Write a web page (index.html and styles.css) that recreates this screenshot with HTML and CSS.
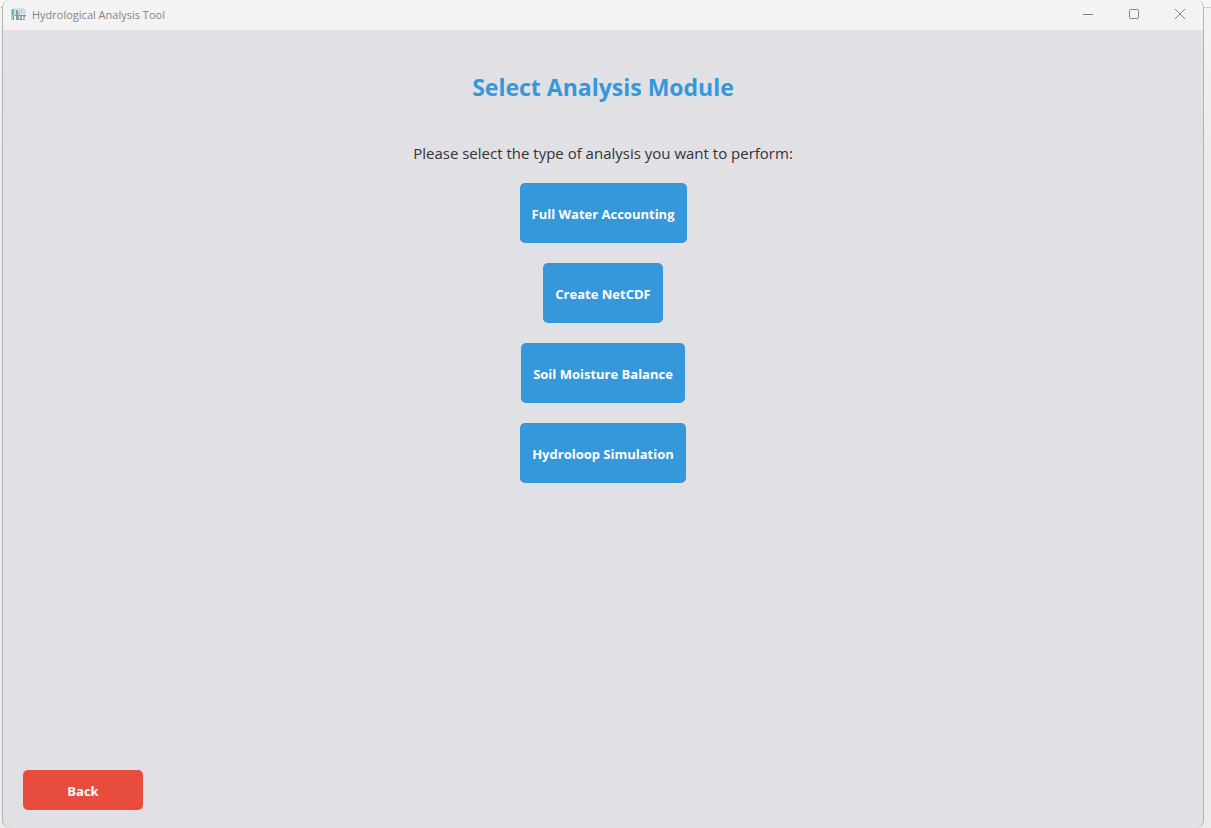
FILE: index.html
```html
<!DOCTYPE html>
<html lang="en">
<head>
<meta charset="utf-8">
<title>Hydrological Analysis Tool</title>
<link rel="stylesheet" href="styles.css">
</head>
<body>
<div class="window">
  <header class="titlebar">
    <svg class="app-icon" width="16" height="16" viewBox="0 0 16 16" aria-hidden="true">
      <rect x="3" y="1" width="10" height="8" fill="#d5e0e6"/>
      <rect x="13" y="2" width="2" height="9" fill="#d4dcf0"/>
      <path d="M0 3h2v10H0z" fill="#8adccf"/>
      <path d="M1 2h2v6H1z" fill="#5fb9c4"/>
      <path d="M2 8h1v5H2z" fill="#4f97d8"/>
      <path d="M0 10h1v3H0z" fill="#b4e29c"/>
      <path d="M5 3h2v9H5z" fill="#8b9ba4"/>
      <path d="M7 5h2v2H7zM10 2h1v4h-1z" fill="#b2c0c8"/>
      <path d="M4 8h11v1H4zM5 12h9v1H5z" fill="#8f9499"/>
      <path d="M7 9h1v3H7zM9 9h2v3H9zM12 9h2v2h-2z" fill="#a0a5a9"/>
    </svg>
    <span class="app-name">Hydrological Analysis Tool</span>
    <div class="controls">
      <button class="control" type="button" aria-label="Minimize">
        <svg width="12" height="12" viewBox="0 0 12 12"><path d="M1 6.5h10"/></svg>
      </button>
      <button class="control" type="button" aria-label="Maximize">
        <svg width="12" height="12" viewBox="0 0 12 12"><rect x="1.5" y="1.5" width="9" height="9" rx="1"/></svg>
      </button>
      <button class="control" type="button" aria-label="Close">
        <svg width="12" height="12" viewBox="0 0 12 12"><path d="M1 1l10 10M11 1L1 11"/></svg>
      </button>
    </div>
  </header>
  <main class="content">
    <h1 class="title">Select Analysis Module</h1>
    <p class="prompt">Please select the type of analysis you want to perform:</p>
    <div class="modules">
      <button class="button" type="button">Full Water Accounting</button>
      <button class="button" type="button">Create NetCDF</button>
      <button class="button" type="button">Soil Moisture Balance</button>
      <button class="button" type="button">Hydroloop Simulation</button>
    </div>
    <button class="button button-back" type="button">Back</button>
  </main>
</div>
</body>
</html>
```

FILE: styles.css
```css
* {
  box-sizing: border-box;
}

body {
  margin: 0;
  height: 100vh;
  padding: 0 7px 0 2px;
  overflow: hidden;
  background: linear-gradient(#f6f6f6 7px, #cccccc 7px, #cccccc 8px, #f3f3f3 8px, #ebebeb 160px);
  font-family: "Open Sans", "Noto Sans", sans-serif;
}

.window {
  display: flex;
  flex-direction: column;
  height: 100%;
  overflow: hidden;
  border: 1px solid #b4b4b4;
  border-width: 0 1px;
  border-radius: 8px;
  background: #e1e0e5;
}

.titlebar {
  display: flex;
  align-items: center;
  flex: none;
  height: 30px;
  padding-left: 8px;
  background: #f3f3f3;
}

.app-icon {
  margin-right: 5px;
}

.app-name {
  color: #858585;
  font-size: 11px;
  line-height: 16px;
}

.controls {
  display: flex;
  margin-left: auto;
}

.control {
  display: flex;
  align-items: center;
  justify-content: center;
  width: 46px;
  height: 28px;
  padding: 0;
  border: 0;
  background: none;
}

.controls {
  align-self: flex-start;
}

.control svg {
  fill: none;
  stroke: #858585;
}

.content {
  display: flex;
  flex: 1;
  flex-direction: column;
  align-items: center;
  padding: 40px 20px 18px;
}

.title {
  margin: 0;
  color: #3498db;
  font-size: 23px;
  font-weight: 700;
  line-height: 35px;
}

.prompt {
  margin: 36px 0 18px;
  color: #333333;
  font-size: 15px;
  line-height: 24px;
}

.modules {
  display: flex;
  flex-direction: column;
  align-items: center;
  gap: 20px;
}

.button {
  min-width: 120px;
  height: 60px;
  padding: 2px 12px 0;
  border: 0;
  border-radius: 5px;
  background: #3498db;
  color: #ffffff;
  font-family: inherit;
  font-size: 13px;
  font-weight: 700;
}

.button-back {
  align-self: flex-start;
  height: 40px;
  margin-top: auto;
  background: #e74c3c;
}
```
